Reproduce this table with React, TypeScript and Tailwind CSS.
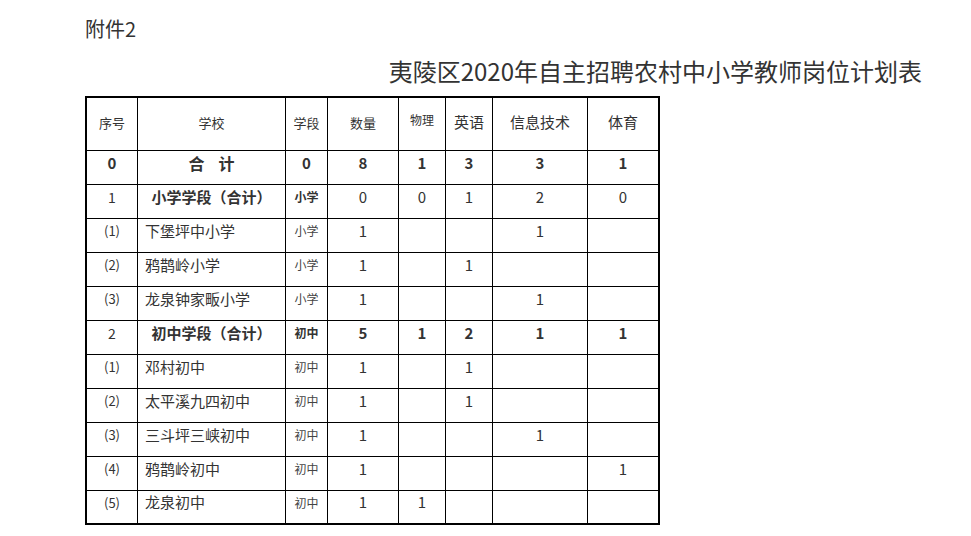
type Row = {
  no: string
  name: string
  stage: string
  vals: string[]
  kind: "total" | "group" | "item"
  boldVals?: boolean
}

const rows: Row[] = [
  { no: "0", name: "合 计", stage: "0", vals: ["8", "1", "3", "3", "1"], kind: "total", boldVals: true },
  { no: "1", name: "小学学段（合计）", stage: "小学", vals: ["0", "0", "1", "2", "0"], kind: "group" },
  { no: "(1)", name: "下堡坪中小学", stage: "小学", vals: ["1", "", "", "1", ""], kind: "item" },
  { no: "(2)", name: "鸦鹊岭小学", stage: "小学", vals: ["1", "", "1", "", ""], kind: "item" },
  { no: "(3)", name: "龙泉钟家畈小学", stage: "小学", vals: ["1", "", "", "1", ""], kind: "item" },
  { no: "2", name: "初中学段（合计）", stage: "初中", vals: ["5", "1", "2", "1", "1"], kind: "group", boldVals: true },
  { no: "(1)", name: "邓村初中", stage: "初中", vals: ["1", "", "1", "", ""], kind: "item" },
  { no: "(2)", name: "太平溪九四初中", stage: "初中", vals: ["1", "", "1", "", ""], kind: "item" },
  { no: "(3)", name: "三斗坪三峡初中", stage: "初中", vals: ["1", "", "", "1", ""], kind: "item" },
  { no: "(4)", name: "鸦鹊岭初中", stage: "初中", vals: ["1", "", "", "", "1"], kind: "item" },
  { no: "(5)", name: "龙泉初中", stage: "初中", vals: ["1", "1", "", "", ""], kind: "item" },
]

const Cell = ({ children, last, bottom, className = "" }: { children?: React.ReactNode; last?: boolean; bottom?: boolean; className?: string }) => (
  <div className={`flex items-center justify-center border-black ${last ? "" : "border-r"} ${bottom ? "" : "border-b"} ${className}`}>
    {children}
  </div>
)

export default function App() {
  return (
    <div className="w-[971px] h-[536px] bg-white text-[#333] font-['Noto_Sans_CJK_SC',sans-serif] pl-[85px] overflow-hidden">
      <div className="pt-[19px] text-[20px] leading-[20px]">附件2</div>

      <div className="mt-[20px] pr-[49px] text-right text-[24px] leading-[24px]">夷陵区2020年自主招聘农村中小学教师岗位计划表</div>

      <div className="mt-[13px] w-[575px] border-2 border-black grid grid-cols-[51px_148px_42px_71px_47px_47px_95px_70px]">
        {/* header */}
        <Cell className="h-[53px] pb-[3px] text-[13px]">序号</Cell>
        <Cell className="h-[53px] pb-[3px] text-[13px]">学校</Cell>
        <Cell className="h-[53px] pb-[3px] text-[13px]">学段</Cell>
        <Cell className="h-[53px] pb-[3px] text-[13px]">数量</Cell>
        <Cell className="h-[53px] pb-[8px] text-[12px]">物理</Cell>
        <Cell className="h-[53px] pb-[3px] text-[15px]">英语</Cell>
        <Cell className="h-[53px] pb-[3px] text-[15px]">信息技术</Cell>
        <Cell last className="h-[53px] pb-[3px] text-[15px]">体育</Cell>

        {rows.map((r, i) => {
          const bottom = i === rows.length - 1
          const h = bottom ? "h-[32px]" : "h-[34px]"
          const bold = r.kind !== "item"
          return (
            <div key={i} className="contents">
              <Cell bottom={bottom} className={`${h} pb-[9px] ${r.kind === "total" ? "font-bold text-[15px]" : r.kind === "item" ? "text-[13px]" : "text-[14px]"}`}>
                {r.no}
              </Cell>
              <Cell
                bottom={bottom}
                className={`${h} pb-[9px] ${r.kind === "item" ? "justify-start pl-[7px] text-[15px]" : "font-bold"} ${r.kind === "total" ? "text-[16px]" : ""} ${r.kind === "group" ? "text-[15px]" : ""}`}
              >
                {r.kind === "total" ? (
                  <span className="flex gap-[14px]">
                    <span>合</span>
                    <span>计</span>
                  </span>
                ) : (
                  r.name
                )}
              </Cell>
              <Cell bottom={bottom} className={`${h} pb-[9px] ${r.kind === "total" ? "text-[15px]" : "text-[12px]"} ${bold ? "font-bold" : "text-[#444]"}`}>
                {r.stage}
              </Cell>
              {r.vals.map((v, j) => (
                <Cell key={j} bottom={bottom} last={j === 4} className={`${h} pb-[9px] text-[15px] ${r.boldVals ? "font-bold" : ""}`}>
                  {v}
                </Cell>
              ))}
            </div>
          )
        })}
      </div>
    </div>
  )
}
